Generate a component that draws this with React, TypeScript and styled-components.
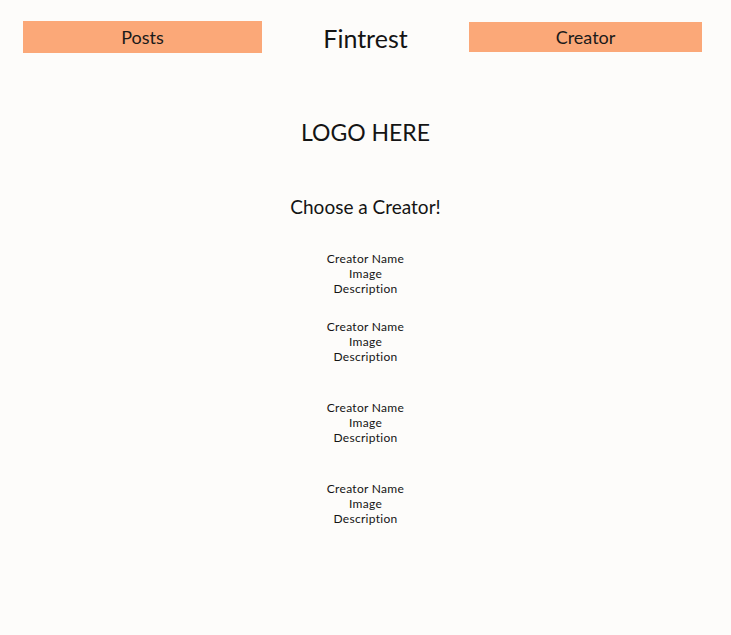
import React from 'react';
import styled, { createGlobalStyle } from 'styled-components';

const GlobalStyle = createGlobalStyle`
  html, body {
    margin: 0;
    padding: 0;
    background-color: #fdfcfa;
  }
  body {
    font-family: Lato, "Noto Sans", sans-serif;
    font-variant-ligatures: none;
    color: #141414;
  }
`;

const Page = styled.div`
  min-height: 635px;
  display: flex;
  flex-direction: column;
  align-items: center;
`;

const Header = styled.header`
  width: 100%;
  box-sizing: border-box;
  display: grid;
  grid-template-columns: 239px 1fr 233px;
  align-items: center;
  padding: 21px 29px 0 23px;
`;

const NavButton = styled.button<{ $height: number }>`
  height: ${(p) => p.$height}px;
  border: none;
  background-color: #fba878;
  font-family: inherit;
  font-size: 18px;
  color: #1a1a1a;
  padding: 0;
  cursor: pointer;
`;

const Brand = styled.div`
  text-align: center;
  font-size: 25px;
  line-height: 30px;
  padding-top: 2px;
`;

const Logo = styled.h1`
  margin: 64px 0 0;
  font-size: 23px;
  font-weight: 400;
  line-height: 30px;
`;

const Title = styled.h2`
  margin: 48px 0 0;
  font-size: 19px;
  font-weight: 400;
  line-height: 24px;
`;

const CreatorList = styled.div`
  margin-top: 32px;
  display: flex;
  flex-direction: column;
  align-items: center;
`;

const CreatorCard = styled.div<{ $space: number }>`
  margin-top: ${(p) => p.$space}px;
  text-align: center;
  font-size: 12px;
  line-height: 15px;
  letter-spacing: 0.3px;
`;

const creators = [0, 23, 36, 36];

const App: React.FC = () => {
  return (
    <Page>
      <GlobalStyle />
      <Header>
        <NavButton $height={32}>Posts</NavButton>
        <Brand>Fintrest</Brand>
        <NavButton $height={30}>Creator</NavButton>
      </Header>
      <Logo>LOGO HERE</Logo>
      <Title>Choose a Creator!</Title>
      <CreatorList>
        {creators.map((space, i) => (
          <CreatorCard key={i} $space={space}>
            <div>Creator Name</div>
            <div>Image</div>
            <div>Description</div>
          </CreatorCard>
        ))}
      </CreatorList>
    </Page>
  );
};

export default App;
